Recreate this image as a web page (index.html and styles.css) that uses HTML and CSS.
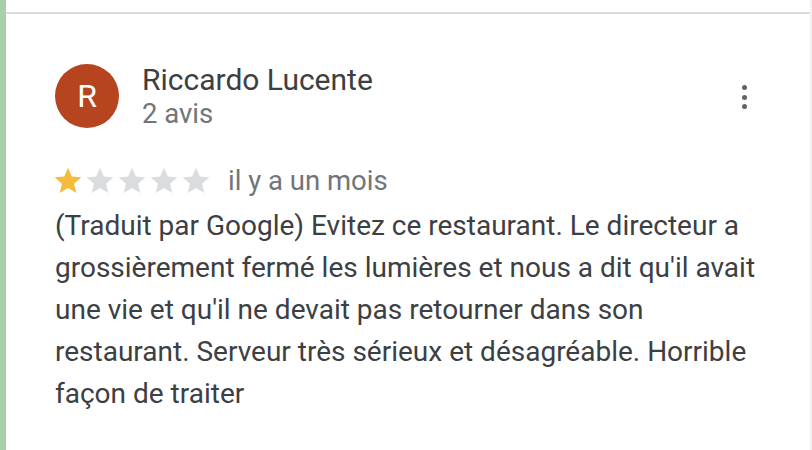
FILE: index.html
```html
<!DOCTYPE html>
<html lang="fr">
<head>
<meta charset="utf-8">
<link rel="stylesheet" href="styles.css">
</head>
<body>
<div class="page">
  <div class="strip"></div>
  <div class="main">
    <div class="review">
      <div class="header">
        <div class="avatar">R</div>
        <div class="who">
          <div class="name">Riccardo Lucente</div>
          <div class="count">2 avis</div>
        </div>
        <div class="menu" aria-label="Plus d'options">
          <span class="dot"></span><span class="dot"></span><span class="dot"></span>
        </div>
      </div>
      <div class="rating">
        <div class="stars">
          <svg class="star on" viewBox="0 0 24 24"><path d="M12 17.27L18.18 21l-1.64-7.03L22 9.24l-7.19-.61L12 2 9.19 8.63 2 9.24l5.46 4.73L5.82 21z"/></svg>
          <svg class="star" viewBox="0 0 24 24"><path d="M12 17.27L18.18 21l-1.64-7.03L22 9.24l-7.19-.61L12 2 9.19 8.63 2 9.24l5.46 4.73L5.82 21z"/></svg>
          <svg class="star" viewBox="0 0 24 24"><path d="M12 17.27L18.18 21l-1.64-7.03L22 9.24l-7.19-.61L12 2 9.19 8.63 2 9.24l5.46 4.73L5.82 21z"/></svg>
          <svg class="star" viewBox="0 0 24 24"><path d="M12 17.27L18.18 21l-1.64-7.03L22 9.24l-7.19-.61L12 2 9.19 8.63 2 9.24l5.46 4.73L5.82 21z"/></svg>
          <svg class="star" viewBox="0 0 24 24"><path d="M12 17.27L18.18 21l-1.64-7.03L22 9.24l-7.19-.61L12 2 9.19 8.63 2 9.24l5.46 4.73L5.82 21z"/></svg>
        </div>
        <span class="date">il y a un mois</span>
      </div>
      <p class="text">(Traduit par Google) Evitez ce restaurant. Le directeur a grossièrement fermé les lumières et nous a dit qu'il avait une vie et qu'il ne devait pas retourner dans son restaurant. Serveur très sérieux et désagréable. Horrible façon de traiter</p>
    </div>
  </div>
  <div class="edge"></div>
</div>
</body>
</html>
```

FILE: styles.css
```css
html, body {
  margin: 0;
  padding: 0;
  background: #ffffff;
}
body {
  font-family: Roboto, "Liberation Sans", Arial, sans-serif;
  color: #3c4043;
}
.page {
  display: flex;
  width: 812px;
  height: 450px;
  overflow: hidden;
}
.strip {
  width: 6px;
  flex: none;
  background: #a7cfa9;
}
.main {
  flex: 1;
  padding-top: 12px;
}
.edge {
  width: 2px;
  flex: none;
  background: #f1f1f1;
}
.review {
  border-top: 2px solid #dadce0;
  padding: 50px 0 0 49px;
}
.header {
  display: flex;
  align-items: flex-start;
}
.avatar {
  width: 64px;
  height: 64px;
  border-radius: 50%;
  background: #b5441f;
  color: #ffffff;
  font-size: 32px;
  display: flex;
  align-items: center;
  justify-content: center;
  flex: none;
}
.who {
  margin-left: 23px;
  flex: 1;
  margin-top: -1px;
}
.name {
  font-size: 30px;
  line-height: 34px;
  color: #3c4043;
}
.count {
  font-size: 27.5px;
  line-height: 33px;
  color: #70757a;
}
.menu {
  display: flex;
  flex-direction: column;
  gap: 4.5px;
  margin: 21px 63px 0 0;
}
.dot {
  width: 5px;
  height: 5px;
  border-radius: 50%;
  background: #5f6368;
}
.rating {
  display: flex;
  align-items: center;
  margin-top: 34px;
}
.stars {
  display: flex;
  margin-left: -3px;
}
.star {
  width: 32px;
  height: 32px;
  fill: #dadce0;
}
.star.on {
  fill: #f5bb3b;
}
.date {
  margin-left: 16px;
  font-size: 27.5px;
  color: #70757a;
}
.text {
  margin: 8px 45px 0 0;
  font-size: 28px;
  line-height: 42px;
  color: #3c4043;
}
```
